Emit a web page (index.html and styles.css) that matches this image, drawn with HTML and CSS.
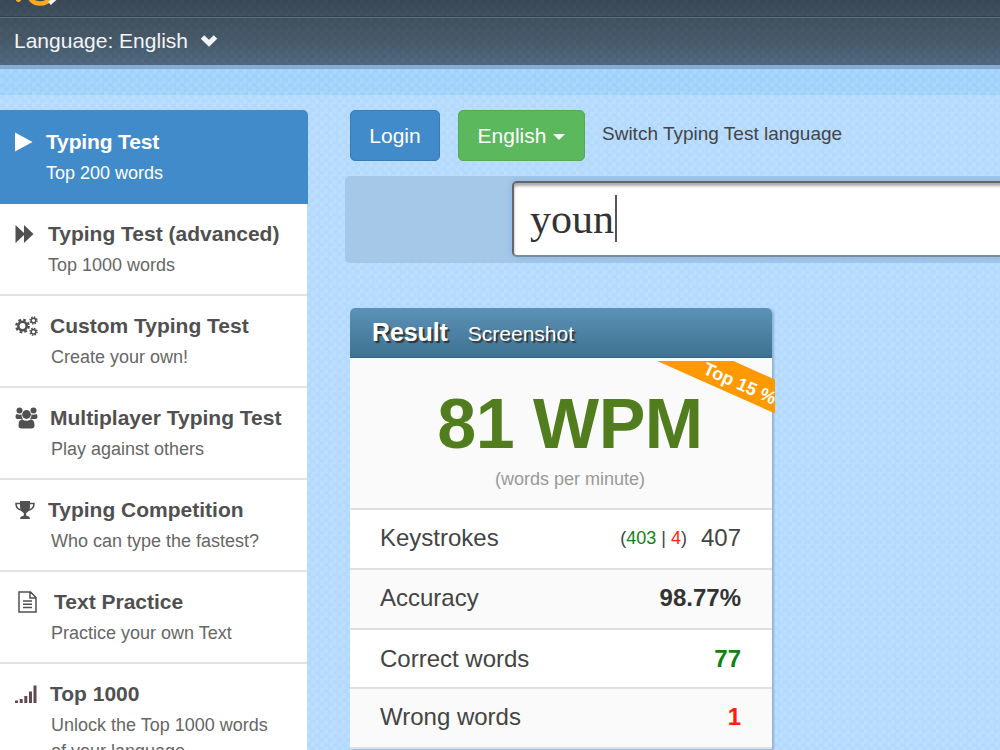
FILE: index.html
```html
<!DOCTYPE html>
<html lang="en">
<head>
  <meta charset="utf-8">
  <title>Typing Test</title>
  <link rel="stylesheet" href="styles.css">
</head>
<body>
  <header class="header">
    <div class="header-top">
      <svg class="logo" width="60" height="10" viewBox="0 0 60 10">
        <path d="M16 0c0 2.500 5 2.500 5 0" fill="#fdb12c"/>
        <path d="M30 -3c2 8 16 9 20 1" fill="none" stroke="#fba81c" stroke-width="4.500"/>
        <path d="M49.500 3.500l5.500-5" stroke="#f2f2f2" stroke-width="4"/>
      </svg>
    </div>
    <div class="language-bar">
      <span>Language: English</span>
      <svg class="chevron" width="18" height="13" viewBox="0 0 18 13">
        <path d="M2.500 3l6.500 6.200 6.500-6.200" fill="none" stroke="#f4f4f4" stroke-width="5"/>
      </svg>
    </div>
  </header>
  <div class="strip"></div>

  <div class="page">
    <nav class="menu">
      <a class="menu-item active">
        <svg class="icon" width="18" height="20" viewBox="0 0 18 20"><path d="M0 0.500L17.500 10 0 19.500z"/></svg>
        <div class="menu-text gap-play"><strong>Typing Test</strong><span>Top 200 words</span></div>
      </a>
      <a class="menu-item">
        <svg class="icon" width="19" height="20" viewBox="0 0 19 20"><path d="M0.500 1L9 9V1l9.500 9L9 19v-8l-8.500 8z"/></svg>
        <div class="menu-text gap-forward"><strong>Typing Test (advanced)</strong><span>Top 1000 words</span></div>
      </a>
      <a class="menu-item">
        <svg class="icon" width="24" height="20" viewBox="0 0 24 20">
          <circle cx="7.500" cy="10" r="4.200" fill="none" stroke="currentColor" stroke-width="2.600"/>
          <circle cx="7.500" cy="10" r="6.300" fill="none" stroke="currentColor" stroke-width="2.200" stroke-dasharray="2.700 2.250"/>
          <g fill="none" stroke="currentColor">
            <circle cx="18.500" cy="4.500" r="2.300" stroke-width="1.500"/>
            <circle cx="18.500" cy="4.500" r="3.500" stroke-width="1.400" stroke-dasharray="1.500 1.250"/>
            <circle cx="18.500" cy="15.800" r="2.300" stroke-width="1.500"/>
            <circle cx="18.500" cy="15.800" r="3.500" stroke-width="1.400" stroke-dasharray="1.500 1.250"/>
          </g>
        </svg>
        <div class="menu-text gap-custom"><strong>Custom Typing Test</strong><span class="indent">Create your own!</span></div>
      </a>
      <a class="menu-item">
        <svg class="icon icon-users" width="24" height="22" viewBox="0 0 24 22">
          <circle cx="4.500" cy="3.500" r="3"/><circle cx="18.500" cy="3.500" r="3"/><circle cx="11.500" cy="7.500" r="4.400"/>
          <path d="M1.500 7q3 1.500 5 .200Q6.300 10 8 12H2.500Q.5 12 .5 10 .5 8 1.500 7zM21.500 7q-3 1.500-5 .200.200 2.800-1.500 4.800h5.500q2 0 2-2 0-2-1-3zM7 12.300q4.500 3 9 0 3.500.7 3.500 6 0 3.200-3 3.200h-10q-3 0-3-3.200 0-5.300 3.500-6z"/>
        </svg>
        <div class="menu-text gap-custom"><strong>Multiplayer Typing Test</strong><span class="indent">Play against others</span></div>
      </a>
      <a class="menu-item">
        <svg class="icon" width="20" height="20" viewBox="0 0 20 20">
          <path d="M5 1h10v5.500q0 4-3 6-1 .7-1 2 0 1.500 2 1.700 2 .3 2 2.800H5q0-2.500 2-2.800 2-.2 2-1.700 0-1.300-1-2-3-2-3-6z"/>
          <path d="M5 3.500H1q0 6 6.500 7M15 3.500h4q0 6-6.500 7" fill="none" stroke="currentColor" stroke-width="1.500"/>
        </svg>
        <div class="menu-text gap-cup"><strong>Typing Competition</strong><span class="indent-cup">Who can type the fastest?</span></div>
      </a>
      <a class="menu-item">
        <svg class="icon icon-file" width="20" height="22" viewBox="0 0 20 22">
          <path d="M1 1h11.500L18 6.500V21H1zM12 1v6h6M5 10h9M5 13.200h9M5 16.400h9" fill="none" stroke="currentColor" stroke-width="1.500"/>
        </svg>
        <div class="menu-text gap-file"><strong>Text Practice</strong><span class="outdent">Practice your own Text</span></div>
      </a>
      <a class="menu-item">
        <svg class="icon" width="23" height="20" viewBox="0 0 23 20">
          <path d="M0 16.500h3V19H0zM4.700 15h3v4h-3zM9.300 12h3v7h-3zM14 7.500h3V19h-3zM18.500 1.500h3V19h-3z" fill="#62484f"/>
        </svg>
        <div class="menu-text gap-top"><strong>Top 1000</strong><span class="indent">Unlock the Top 1000 words<br>of your language</span></div>
      </a>
    </nav>

    <main class="content">
      <div class="toolbar">
        <button class="btn btn-login">Login</button>
        <button class="btn btn-language">English <span class="caret"></span></button>
        <span class="switch-label">Switch Typing Test language</span>
      </div>

      <div class="input-row">
        <div class="word-input">youn<span class="cursor"></span></div>
      </div>

      <section class="result">
        <div class="result-header"><strong>Result</strong><span>Screenshot</span></div>
        <div class="wpm">
          <strong>81 WPM</strong>
          <small>(words per minute)</small>
          <div class="ribbon-clip"><div class="ribbon">Top 15 %</div></div>
        </div>
        <div class="row">
          <span>Keystrokes</span>
          <span class="value"><small>(<i class="correct">403</i> | <i class="wrong">4</i>)</small>407</span>
        </div>
        <div class="row odd"><span>Accuracy</span><strong>98.77%</strong></div>
        <div class="row short"><span>Correct words</span><strong class="correct">77</strong></div>
        <div class="row odd"><span>Wrong words</span><strong class="wrong">1</strong></div>
      </section>
    </main>
  </div>
</body>
</html>
```

FILE: styles.css
```css
* {
  box-sizing: border-box;
}

body {
  margin: 0;
  height: 750px;
  overflow: hidden;
  font-family: "Liberation Sans", Arial, sans-serif;
  color: #444;
  background: repeating-conic-gradient(#b5d9fc 0 25%, #badeff 0 50%) 0 0 / 9px 9px;
}

.header {
  height: 65px;
  color: #f4f4f4;
  background:
    repeating-conic-gradient(rgba(0, 0, 0, 0.04) 0 25%, transparent 0 50%) 0 0 / 9px 9px,
    linear-gradient(#3b4a59, #445461 35%, #485a6a 60%, #526a83);
}

.header-top {
  height: 17px;
  border-bottom: 1px solid #2f414c;
}

.logo {
  display: block;
}

.language-bar {
  display: flex;
  align-items: center;
  height: 48px;
  padding: 0 0 2px 14px;
  border-top: 1px solid #60717d;
  font-size: 21px;
}

.chevron {
  margin-left: 12px;
}

.strip {
  height: 30px;
  border-top: 4px solid #86acd0;
  background: repeating-conic-gradient(#a1d0f9 0 25%, #a7d6ff 0 50%) 0 0 / 9px 9px;
}

.page {
  display: flex;
  align-items: flex-start;
  padding-top: 15px;
}

.menu {
  width: 308px;
  flex: none;
}

.menu-item {
  display: flex;
  align-items: flex-start;
  height: 92px;
  margin-right: 1px;
  padding: 18px 0 0 15px;
  background: #fff;
  border-bottom: 2px solid #e3e3e3;
  color: #505050;
}

.menu-item.active {
  height: 94px;
  margin-right: 0;
  padding-top: 20px;
  border: 0;
  border-top-right-radius: 5px;
  background: #428bca;
  color: #fff;
}

.icon {
  flex: none;
  margin-top: 2px;
  fill: currentColor;
}

.icon-users {
  margin-top: 1px;
}

.icon-file {
  margin: 1px 0 0 3px;
}

.menu-text strong,
.menu-text span {
  display: block;
}

.menu-text strong {
  font-size: 21px;
  line-height: 24px;
}

.menu-text span {
  margin-top: 6px;
  font-size: 18px;
  line-height: 26px;
  color: #666;
}

.active .menu-text strong {
  letter-spacing: -0.15px;
}

.active .menu-text span {
  color: #fff;
}

.gap-play { margin-left: 13px; }
.gap-forward { margin-left: 14px; }
.gap-custom { margin-left: 11px; }
.gap-cup { margin-left: 13px; }
.gap-file { margin-left: 16px; }
.gap-top { margin-left: 12px; }
.indent { padding-left: 1px; }
.indent-cup { padding-left: 3px; }
.outdent { margin-left: -3px; }

.content {
  flex: 1;
  min-width: 0;
  padding-left: 37px;
}

.toolbar {
  display: flex;
  padding-left: 5px;
}

.btn {
  height: 51px;
  padding: 0;
  border: 1px solid;
  border-radius: 5px;
  font: 21px "Liberation Sans", Arial, sans-serif;
  color: #fff;
}

.btn-login {
  width: 90px;
  background: #428bca;
  border-color: #357ebd;
}

.btn-language {
  display: flex;
  align-items: center;
  justify-content: center;
  width: 127px;
  margin-left: 18px;
  background: #5cb85c;
  border-color: #4cae4c;
}

.caret {
  margin: 3px 0 0 7px;
  border: 6px solid transparent;
  border-top-color: #fff;
  border-bottom: 0;
}

.switch-label {
  margin: 12px 0 0 17px;
  font-size: 19px;
  line-height: 24px;
}

.input-row {
  height: 87px;
  margin-top: 15px;
  padding: 5px 0 6px 167px;
  border-radius: 5px 0 0 5px;
  background: #a6c8e8;
  overflow: hidden;
}

.word-input {
  display: flex;
  align-items: center;
  height: 76px;
  margin-right: -8px;
  padding-left: 16px;
  border: 2px solid #65666b;
  border-bottom-color: #7c8b9c;
  border-radius: 5px;
  background: #fff;
  box-shadow: inset 0 3px 3px #aaa, 0 0 9px #7fb4e4;
  font: 42px "Liberation Serif", "Times New Roman", serif;
  color: #333;
}

.cursor {
  width: 2px;
  height: 47px;
  margin: 0 0 2px 1px;
  background: #555;
}

.result {
  width: 422px;
  margin: 45px 0 0 5px;
  border-radius: 5px 5px 0 0;
  background: #fff;
  box-shadow: 2px 1px 2px #8fb4da;
}

.result-header {
  display: flex;
  align-items: baseline;
  height: 50px;
  padding: 10px 0 0 22px;
  border-bottom: 1px solid #376583;
  border-radius: 5px 5px 0 0;
  background: linear-gradient(#5c92b7, #3f7292);
  color: #fff;
  text-shadow: 2px 2px 1px #333;
}

.result-header strong {
  font-size: 25px;
  letter-spacing: -0.1px;
}

.result-header span {
  margin-left: 20px;
  font-size: 21px;
}

.wpm {
  position: relative;
  display: flex;
  flex-direction: column;
  align-items: center;
  height: 152px;
  padding-left: 18px;
  border-top: 1px solid #fff;
  border-bottom: 2px solid #e0e0e0;
  background: #fafafa;
}

.wpm strong {
  margin-top: 25px;
  font-size: 70px;
  line-height: 80px;
  letter-spacing: -0.5px;
  color: #517d1f;
}

.wpm small {
  margin-top: 4px;
  font-size: 18px;
  line-height: 22px;
  color: #999;
}

.ribbon-clip {
  position: absolute;
  top: 2px;
  right: -3px;
  width: 130px;
  height: 75px;
  overflow: hidden;
}

.ribbon {
  position: absolute;
  top: 4px;
  left: -6px;
  width: 200px;
  height: 31px;
  padding-left: 4px;
  transform: rotate(24deg);
  background: #ff9900;
  color: #fff;
  font-size: 18px;
  font-weight: bold;
  line-height: 36px;
  text-align: center;
}

.row {
  display: flex;
  align-items: center;
  justify-content: space-between;
  height: 60px;
  padding: 0 31px 3px 30px;
  border-bottom: 2px solid #e0e0e0;
  font-size: 24px;
}

.row.odd {
  padding-bottom: 2px;
  background: #fafafa;
}

.row.short {
  height: 59px;
  padding-bottom: 0;
}

.row strong {
  color: #333;
}

.row small {
  margin-right: 14px;
  font-size: 18px;
  vertical-align: 2px;
}

.row i {
  font-style: normal;
}

.row .correct {
  color: #128012;
}

.row .wrong {
  color: #ff1e0a;
}
```
